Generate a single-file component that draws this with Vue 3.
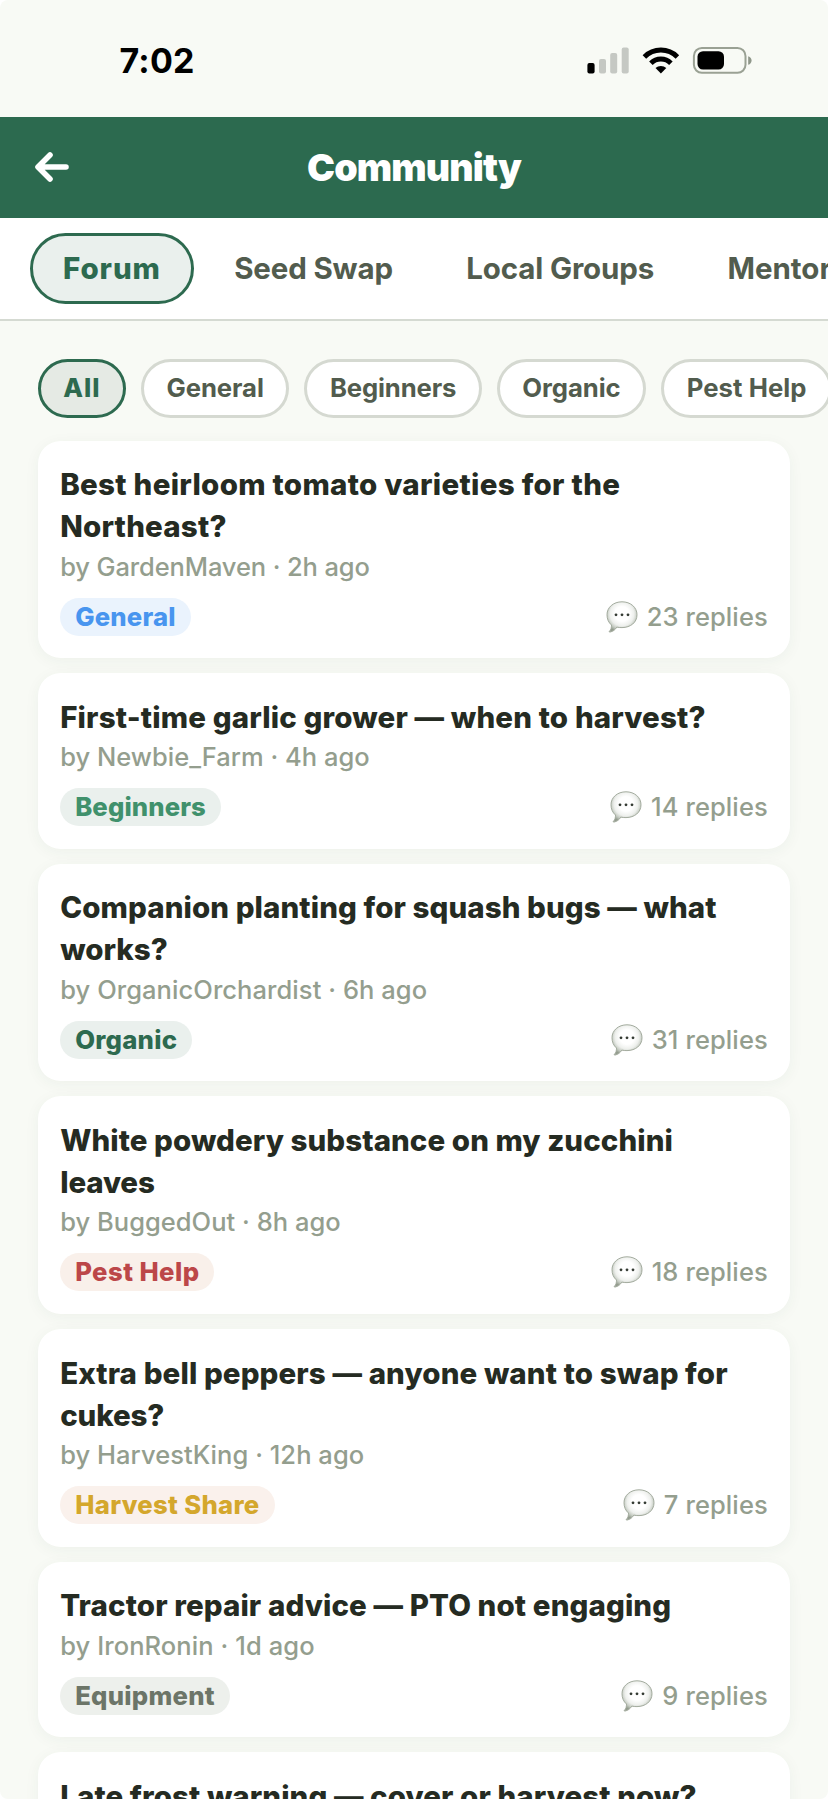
<script setup>
// Spreads a label's letters so that it fills its given width.
const vFit = {
  mounted(el, { value }) {
    if (!value) return
    const natural = el.getBoundingClientRect().width
    el.style.letterSpacing = `${(value - natural) / el.textContent.length}px`
  },
}

const tabs = [
  { label: 'Forum', width: 98, active: true },
  { label: 'Seed Swap', width: 158.7 },
  { label: 'Local Groups', width: 188 },
  { label: 'Mentorship' },
]
const filters = [
  { label: 'All', width: 37.2, active: true },
  { label: 'General', width: 97.2 },
  { label: 'Beginners', width: 126.2 },
  { label: 'Organic', width: 98.2 },
  { label: 'Pest Help', width: 119.8 },
]
const posts = [
  { lines: [['Best heirloom tomato varieties for the', 560], ['Northeast?', 166.5]], meta: ['by GardenMaven · 2h ago', 309.5], tag: ['General', 100.5], tone: 'blue', replies: 23 },
  { lines: [['First-time garlic grower — when to harvest?', 645.5]], meta: ['by Newbie_Farm · 4h ago', 309.5], tag: ['Beginners', 130.7], tone: 'mint', replies: 14 },
  { lines: [['Companion planting for squash bugs — what', 656.5], ['works?', 107.5]], meta: ['by OrganicOrchardist · 6h ago', 367], tag: ['Organic', 102], tone: 'green', replies: 31 },
  { lines: [['White powdery substance on my zucchini', 612.7], ['leaves', 94.5]], meta: ['by BuggedOut · 8h ago', 280.5], tag: ['Pest Help', 124.3], tone: 'red', replies: 18 },
  { lines: [['Extra bell peppers — anyone want to swap for', 667.5], ['cukes?', 104]], meta: ['by HarvestKing · 12h ago', 304], tag: ['Harvest Share', 184.4], tone: 'gold', replies: 7 },
  { lines: [['Tractor repair advice — PTO not engaging', 611]], meta: ['by IronRonin · 1d ago', 254.5], tag: ['Equipment', 139.7], tone: 'gray', replies: 9 },
  { lines: [['Late frost warning — cover or harvest now?', 636.5]] },
]
</script>

<template>
  <div class="screen">
    <div class="status">
      <span class="time">7:02</span>
      <svg class="status-icons" width="166" height="30" viewBox="586 45 166 30">
        <rect x="587.4" y="63" width="7.2" height="10.6" rx="2" fill="#000" />
        <rect x="599" y="59" width="7" height="14.6" rx="2" fill="#c5c8c3" />
        <rect x="610.2" y="53" width="7" height="20.6" rx="2" fill="#c5c8c3" />
        <rect x="621.7" y="47.4" width="7" height="26.2" rx="2" fill="#c5c8c3" />
        <g fill="none" stroke="#000" stroke-width="5">
          <path d="M644.4 56.9 A23.4 23.4 0 0 1 677.4 56.9" />
          <path d="M650.9 63.2 A14.2 14.2 0 0 1 670.9 63.2" />
        </g>
        <path d="M660.9 73.6 L655.5 68.1 A7.8 7.8 0 0 1 666.3 68.1 Z" fill="#000" />
        <rect x="693.9" y="47.9" width="51.6" height="24.9" rx="8" fill="none" stroke="#9aa194" stroke-width="2" />
        <rect x="697.5" y="51.2" width="26.5" height="18.4" rx="5.5" fill="#000" />
        <path d="M748.2 56.2 C752.7 57.4 752.7 63.6 748.2 64.8 Z" fill="#8f978a" />
      </svg>
    </div>

    <header class="header">
      <svg class="back" width="36" height="32" viewBox="0 0 36 32">
        <path d="M16 4 L4 16 L16 28 M4.500 16 H32" fill="none" stroke="#fff" stroke-width="5.600" stroke-linecap="round" stroke-linejoin="round" />
      </svg>
      <h1><span v-fit="214">Community</span></h1>
    </header>

    <nav class="tabs">
      <div v-for="t in tabs" :key="t.label" class="tab" :class="{ active: t.active }">
        <span v-fit="t.width">{{ t.label }}</span>
      </div>
    </nav>

    <main>
      <div class="filters">
        <div v-for="f in filters" :key="f.label" class="chip" :class="{ active: f.active }">
          <span v-fit="f.width">{{ f.label }}</span>
        </div>
      </div>

      <section class="list">
        <article v-for="p in posts" :key="p.lines[0][0]" class="card">
          <h2><span v-for="l in p.lines" :key="l[0]" v-fit="l[1]">{{ l[0] }}</span></h2>
          <template v-if="p.meta">
            <p class="meta"><span v-fit="p.meta[1]">{{ p.meta[0] }}</span></p>
            <div class="foot">
              <span class="tag" :class="p.tone"><span v-fit="p.tag[1]">{{ p.tag[0] }}</span></span>
              <span class="replies">
                <svg width="32" height="32" viewBox="0 0 32 32">
                  <defs>
                    <radialGradient id="bubble" cx="50%" cy="40%" r="60%">
                      <stop offset="0.4" stop-color="#fff" />
                      <stop offset="0.66" stop-color="#eef0ed" />
                      <stop offset="0.84" stop-color="#c6ccc3" />
                      <stop offset="1" stop-color="#939c8e" />
                    </radialGradient>
                  </defs>
                  <path d="M16 .8 C24.500 .8 31 6.300 31 13.700 C31 21.500 24.600 26.500 16 26.600 C14 26.600 12.300 26.500 10.800 26.100 C9.300 28.800 7 30.500 3.800 31.100 C3.200 31.200 3.100 30.700 3.500 30.300 C5.100 28.600 5.500 26.600 5.500 24 C2.500 21.600 1 18 1 13.700 C1 6.300 7.500 .8 16 .8 Z" fill="url(#bubble)" stroke="#a3ab9e" stroke-width="1" />
                  <circle cx="10" cy="13.800" r="1.400" fill="#333a32" />
                  <circle cx="16" cy="13.800" r="1.400" fill="#333a32" />
                  <circle cx="22" cy="13.800" r="1.400" fill="#333a32" />
                </svg>
                {{ p.replies }} replies
              </span>
            </div>
          </template>
        </article>
      </section>
    </main>
  </div>
</template>

<style>
body {
  background: #fff;
  overflow: hidden;
}
</style>

<style scoped>
.screen {
  width: 828px;
  height: 1799px;
  overflow: hidden;
  border-radius: 8px;
  background: #f8faf5;
  font-family: Inter, "Liberation Sans", sans-serif;
  display: flex;
  flex-direction: column;
}
.status {
  flex: none;
  height: 116.500px;
  box-sizing: border-box;
  padding: 0 76px 0 119.500px;
  display: flex;
  align-items: center;
  justify-content: space-between;
}
.time {
  font-size: 34px;
  font-weight: 730;
  line-height: 40px;
  padding-top: 6px;
  letter-spacing: 0.200px;
  color: #000;
}
.status-icons {
  padding-top: 4px;
}
.header {
  flex: none;
  height: 101px;
  box-sizing: border-box;
  padding: 0 34px;
  background: #2c6a4f;
  display: grid;
  grid-template-columns: 40px 1fr 40px;
  align-items: center;
}
.header h1 {
  margin: 0;
  text-align: center;
  color: #fff;
  font-size: 37.500px;
  font-weight: 860;
}
.header h1 span {
  display: inline-block;
}
.tabs {
  flex: none;
  height: 103px;
  box-sizing: border-box;
  border-bottom: 2px solid #d5dad2;
  padding: 15px 30px;
  background: #fff;
  display: flex;
  gap: 7.500px;
  overflow: hidden;
}
.tab {
  flex: none;
  height: 71px;
  box-sizing: border-box;
  padding: 0 29.900px;
  border: 3px solid transparent;
  border-radius: 36px;
  display: flex;
  align-items: center;
  font-size: 29.500px;
  font-weight: 650;
  color: #525c4e;
}
.tab.active {
  border-color: #2d6a4f;
  background: #eaf0ed;
  color: #2d6a4f;
  font-weight: 820;
}
main {
  padding: 38.500px 37.600px 0;
}
.filters {
  display: flex;
  gap: 15px;
  height: 59px;
  margin-bottom: 22.500px;
}
.chip {
  flex: none;
  box-sizing: border-box;
  padding: 0 22.600px;
  border: 3px solid #d5d9d1;
  border-radius: 30px;
  background: #fff;
  display: flex;
  align-items: center;
  font-size: 25.700px;
  font-weight: 650;
  color: #525c4e;
}
.chip span {
  position: relative;
  top: -1px;
}
.chip.active {
  border-color: #2d6a4f;
  background: #e5eae4;
  color: #2d6a4f;
  font-weight: 800;
}
.list {
  display: flex;
  flex-direction: column;
  gap: 15px;
}
.card {
  padding: 22.600px;
  border-radius: 22.600px;
  background: #fff;
  box-shadow: 0 3px 15px rgba(45, 74, 55, 0.05);
}
h2 {
  margin: 0;
  font-size: 29.500px;
  font-weight: 770;
  line-height: 42.250px;
  color: #252b22;
}
h2 span {
  display: block;
  width: fit-content;
  white-space: nowrap;
}
.meta {
  margin: 0 0 11.600px;
  font-size: 25.500px;
  font-weight: 470;
  line-height: 38.400px;
  color: #949e8e;
}
.foot {
  height: 38px;
  display: flex;
  justify-content: space-between;
  align-items: center;
}
.tag {
  height: 38px;
  line-height: 38px;
  padding: 0 15px;
  border-radius: 19px;
  font-size: 25.700px;
  font-weight: 770;
}
.blue { color: #4895ef; background: #eaf3fd; }
.mint { color: #40916c; background: #eaf0ed; }
.green { color: #2d6a4f; background: #eaf0ed; }
.red { color: #bc4749; background: #f9f0ea; }
.gold { color: #d4a72c; background: #faf1ec; }
.gray { color: #6c7568; background: #edf0ec; }
.replies {
  display: flex;
  align-items: center;
  gap: 9px;
  font-size: 25.500px;
  font-weight: 500;
  line-height: 36px;
  letter-spacing: 0.100px;
  color: #949e8e;
}
</style>
